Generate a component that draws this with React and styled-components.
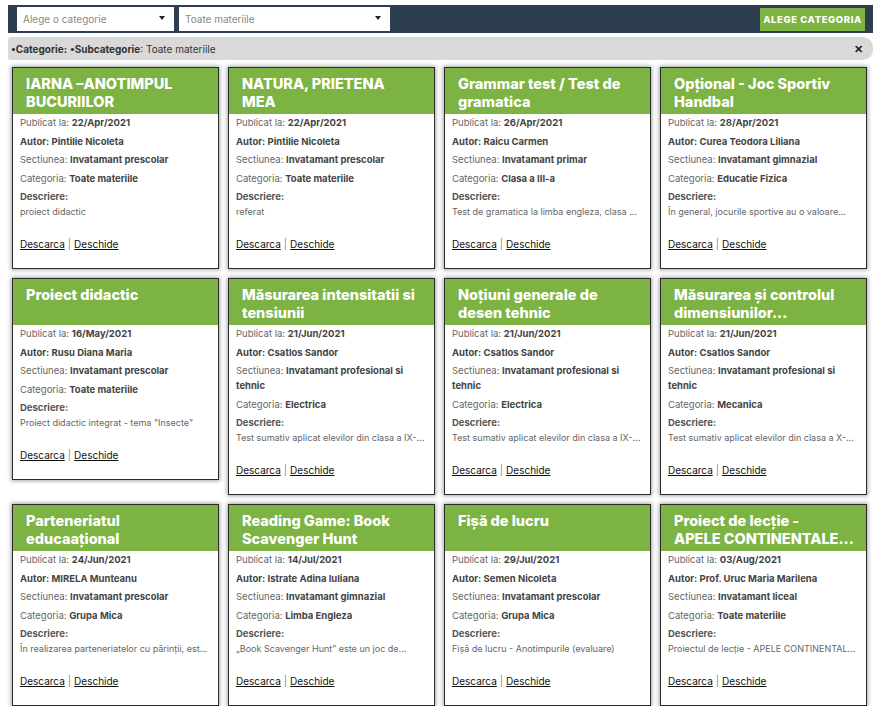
import React from "react";
import styled, { createGlobalStyle } from "styled-components";

const GlobalStyle = createGlobalStyle`
  html, body {
    margin: 0;
    padding: 0;
    background: #ffffff;
  }
  body {
    font-family: "Inter", "Open Sans", sans-serif;
    color: #333;
  }
`;

const materials = [
  {
    title: "IARNA –ANOTIMPUL BUCURIILOR",
    date: "22/Apr/2021",
    author: "Pintilie Nicoleta",
    section: "Invatamant prescolar",
    category: "Toate materiile",
    description: "proiect didactic",
  },
  {
    title: "NATURA, PRIETENA MEA",
    date: "22/Apr/2021",
    author: "Pintilie Nicoleta",
    section: "Invatamant prescolar",
    category: "Toate materiile",
    description: "referat",
  },
  {
    title: "Grammar test / Test de gramatica",
    date: "26/Apr/2021",
    author: "Raicu Carmen",
    section: "Invatamant primar",
    category: "Clasa a III-a",
    description: "Test de gramatica la limba engleza, clasa ...",
  },
  {
    title: "Opțional - Joc Sportiv Handbal",
    date: "28/Apr/2021",
    author: "Curea Teodora Liliana",
    section: "Invatamant gimnazial",
    category: "Educatie Fizica",
    description: "În general, jocurile sportive au o valoare...",
  },
  {
    title: "Proiect didactic",
    date: "16/May/2021",
    author: "Rusu Diana Maria",
    section: "Invatamant prescolar",
    category: "Toate materiile",
    description: 'Proiect didactic integrat - tema "Insecte"',
  },
  {
    title: "Măsurarea intensitatii si tensiunii",
    date: "21/Jun/2021",
    author: "Csatlos Sandor",
    section: "Invatamant profesional si tehnic",
    category: "Electrica",
    description: "Test sumativ aplicat elevilor din clasa a IX-...",
  },
  {
    title: "Noțiuni generale de desen tehnic",
    date: "21/Jun/2021",
    author: "Csatlos Sandor",
    section: "Invatamant profesional si tehnic",
    category: "Electrica",
    description: "Test sumativ aplicat elevilor din clasa a IX-...",
  },
  {
    title: "Măsurarea și controlul dimensiunilor...",
    date: "21/Jun/2021",
    author: "Csatlos Sandor",
    section: "Invatamant profesional si tehnic",
    category: "Mecanica",
    description: "Test sumativ aplicat elevilor din clasa a X-...",
  },
  {
    title: "Parteneriatul educaațional",
    date: "24/Jun/2021",
    author: "MIRELA Munteanu",
    section: "Invatamant prescolar",
    category: "Grupa Mica",
    description: "În realizarea parteneriatelor cu părinții, est...",
  },
  {
    title: "Reading Game: Book Scavenger Hunt",
    date: "14/Jul/2021",
    author: "Istrate Adina Iuliana",
    section: "Invatamant gimnazial",
    category: "Limba Engleza",
    description: "„Book Scavenger Hunt” este un joc de...",
  },
  {
    title: "Fișă de lucru",
    date: "29/Jul/2021",
    author: "Semen Nicoleta",
    section: "Invatamant prescolar",
    category: "Grupa Mica",
    description: "Fișă de lucru - Anotimpurile (evaluare)",
  },
  {
    lines: ["Proiect de lecție -", "APELE CONTINENTALE..."],
    date: "03/Aug/2021",
    author: "Prof. Uruc Maria Marilena",
    section: "Invatamant liceal",
    category: "Toate materiile",
    description: "Proiectul de lecție - APELE CONTINENTAL...",
  },
];

function Card({ item }) {
  return (
    <CardBox>
      <CardHeader>
        <CardTitle>
          {item.lines
            ? item.lines.map((l) => <TitleLine key={l}>{l}</TitleLine>)
            : item.title}
        </CardTitle>
      </CardHeader>
      <CardBody>
        <Line>
          Publicat la: <Value>{item.date}</Value>
        </Line>
        <Line $strong>Autor: {item.author}</Line>
        <Line>
          Sectiunea: <Value>{item.section}</Value>
        </Line>
        <Line>
          Categoria: <Value>{item.category}</Value>
        </Line>
        <Label>Descriere:</Label>
        <Description>{item.description}</Description>
        <Links>
          <LinkText href="#">Descarca</LinkText>
          <Separator>|</Separator>
          <LinkText href="#">Deschide</LinkText>
        </Links>
      </CardBody>
    </CardBox>
  );
}

export default function App() {
  return (
    <Page>
      <GlobalStyle />
      <Toolbar>
        <Select>
          <span>Alege o categorie</span>
          <Caret />
        </Select>
        <Select $wide>
          <span>Toate materiile</span>
          <Caret />
        </Select>
        <Spacer />
        <ChooseButton>ALEGE CATEGORIA</ChooseButton>
      </Toolbar>
      <Breadcrumb>
        <span>
          <b>•Categorie:</b> <b>•Subcategorie</b>: Toate materiile
        </span>
        <Close>✕</Close>
      </Breadcrumb>
      <Grid>
        {materials.map((m, i) => (
          <Card key={i} item={m} />
        ))}
      </Grid>
    </Page>
  );
}

const Page = styled.div`
  width: 865px;
  padding: 5px 0 0 8px;
`;

const Toolbar = styled.div`
  height: 28px;
  background: #2c3e50;
  display: flex;
  align-items: center;
  padding: 0 8px 0 9px;
  gap: 5px;
  box-sizing: border-box;
`;

const Select = styled.div`
  width: ${(p) => (p.$wide ? "211px" : "157px")};
  height: 24px;
  background: #fff;
  box-sizing: border-box;
  display: flex;
  align-items: center;
  justify-content: space-between;
  padding: 0 9px 0 6px;
  font-size: 10px;
  color: #888;
`;

const Caret = styled.span`
  width: 0;
  height: 0;
  border-left: 3.5px solid transparent;
  border-right: 3.5px solid transparent;
  border-top: 4px solid #222;
  margin-top: -3px;
`;

const Spacer = styled.div`
  flex: 1;
`;

const ChooseButton = styled.div`
  width: 105px;
  height: 23px;
  background: #7cb342;
  color: #fff;
  font-weight: 800;
  font-size: 9.5px;
  letter-spacing: 0.6px;
  display: flex;
  align-items: center;
  justify-content: center;
`;

const Breadcrumb = styled.div`
  margin-top: 4px;
  height: 23px;
  background: #d9d9d9;
  border-radius: 3px 10px 10px 3px;
  display: flex;
  align-items: center;
  justify-content: space-between;
  padding: 0 10px 0 3px;
  font-size: 10px;
  color: #333;
  b {
    font-weight: 700;
  }
`;

const Close = styled.span`
  font-size: 11px;
  font-weight: 800;
  color: #222;
`;

const Grid = styled.div`
  display: grid;
  grid-template-columns: repeat(4, 207px);
  column-gap: 9px;
  row-gap: 9px;
  align-items: start;
  padding: 7px 0 0 4px;
`;

const CardBox = styled.div`
  background: #fff;
  border: 1px solid #2b2b2b;
  box-shadow: 0 0 4px 1px rgba(0, 0, 0, 0.35);
`;

const CardHeader = styled.div`
  height: 46px;
  background: #7cb342;
  padding: 7px 4px 0 13px;
  box-sizing: border-box;
`;

const CardTitle = styled.h3`
  margin: 0;
  padding-right: 12px;
  color: #fff;
  font-size: 14.5px;
  font-weight: 800;
  line-height: 18px;
  display: -webkit-box;
  -webkit-line-clamp: 2;
  -webkit-box-orient: vertical;
  overflow: hidden;
`;

const TitleLine = styled.span`
  display: block;
  white-space: nowrap;
`;

const CardBody = styled.div`
  padding: 1px 8px 16px 7px;
  font-size: 9.5px;
  color: #666;
`;

const Line = styled.p`
  margin: 0 0 3.5px;
  line-height: 15px;
  font-weight: ${(p) => (p.$strong ? 700 : 400)};
  color: ${(p) => (p.$strong ? "#444" : "#666")};
`;

const Value = styled.b`
  font-weight: 700;
  color: #444;
`;

const Label = styled.p`
  margin: 0;
  line-height: 15px;
  font-weight: 700;
  color: #555;
`;

const Description = styled.p`
  margin: 0;
  line-height: 16px;
  font-size: 9px;
  color: #666;
  white-space: nowrap;
  overflow: hidden;
  text-overflow: ellipsis;
`;

const Links = styled.div`
  margin-top: 17px;
  line-height: 15px;
  font-size: 10px;
  color: #888;
`;

const LinkText = styled.a`
  color: #111;
  text-decoration: underline;
`;

const Separator = styled.span`
  margin: 0 3px;
`;
